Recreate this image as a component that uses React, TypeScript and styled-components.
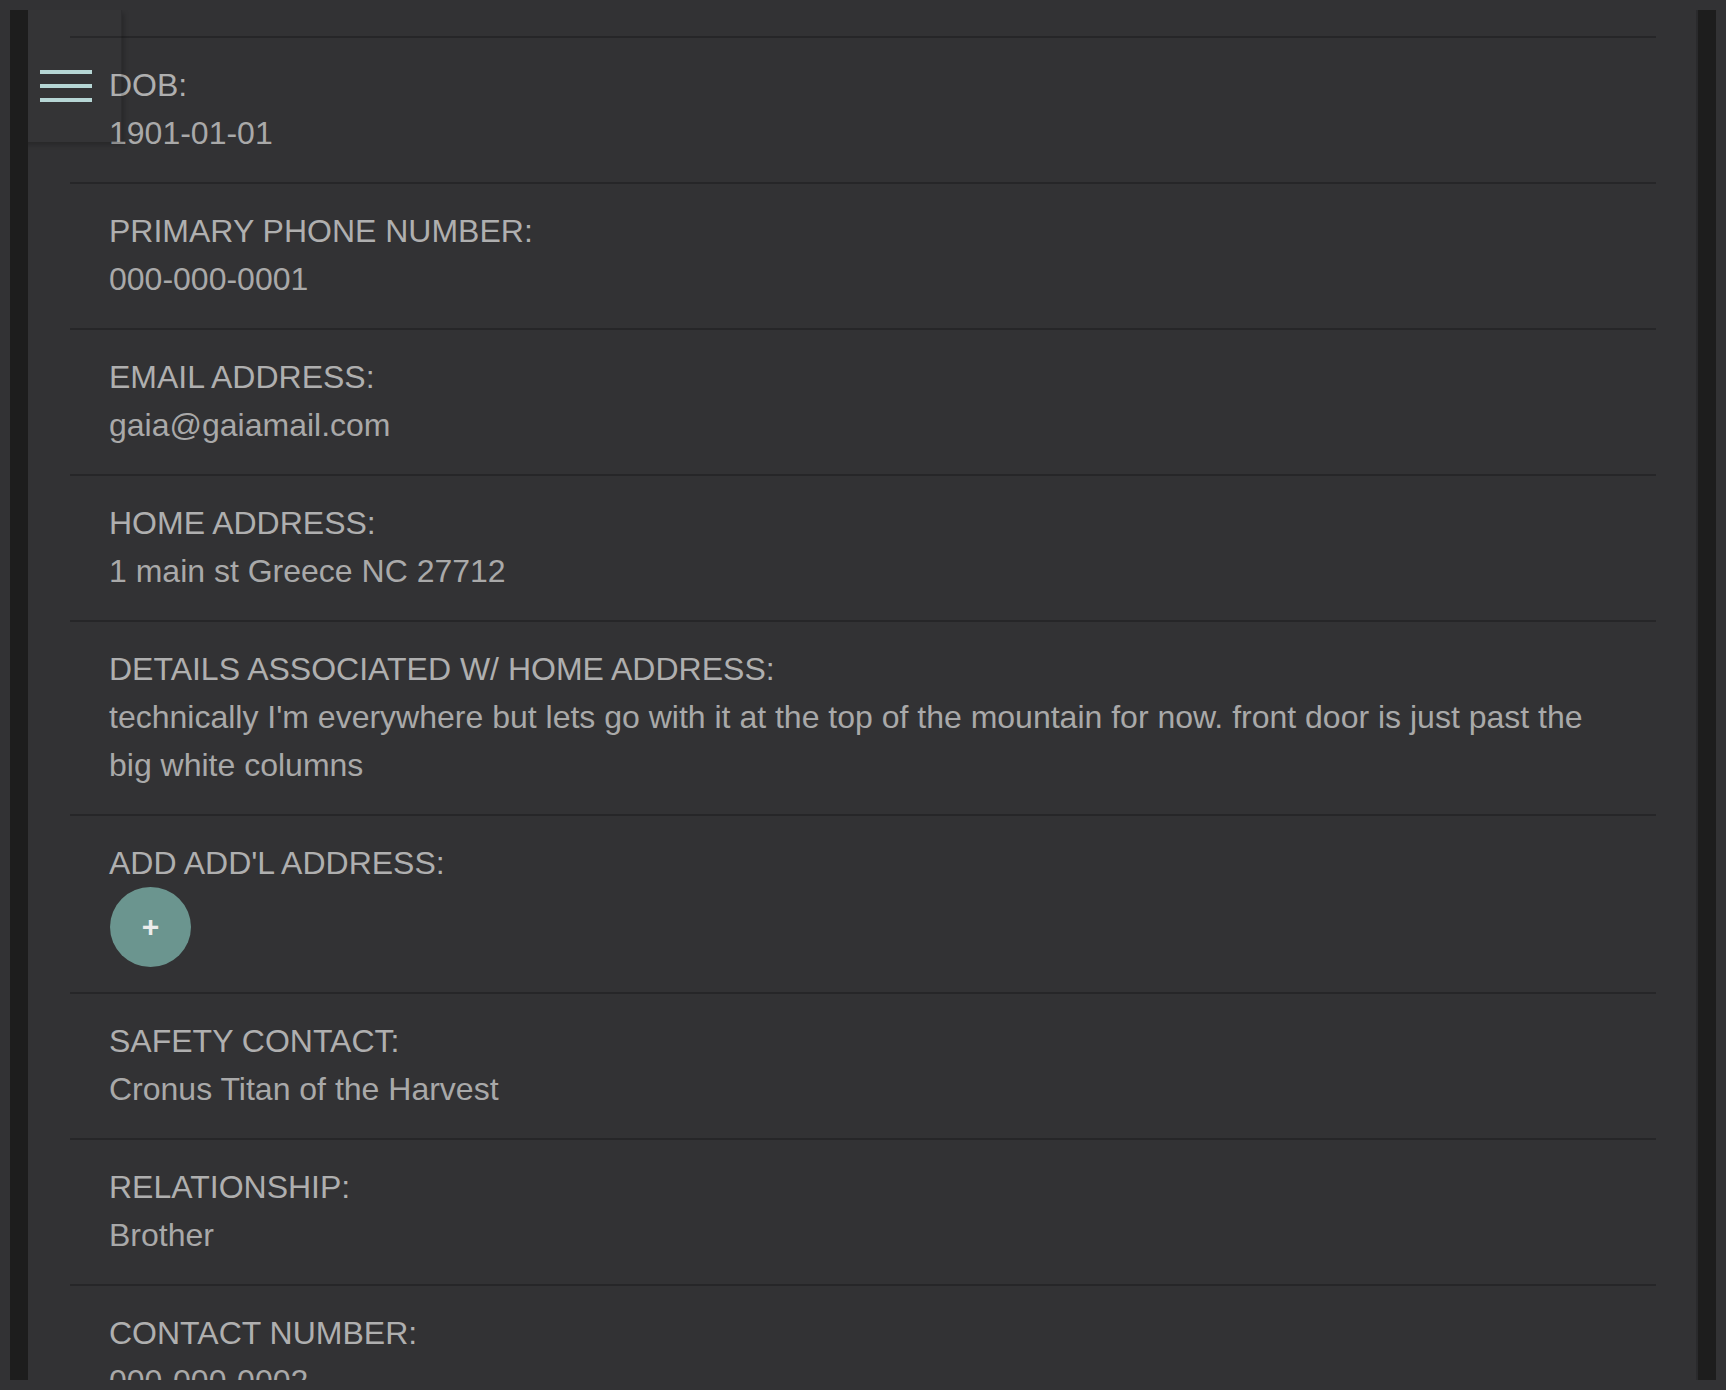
import React from "react";
import styled, { createGlobalStyle } from "styled-components";

const GlobalStyle = createGlobalStyle`
  html, body {
    margin: 0;
    padding: 0;
    background: #323234;
  }
  body {
    font-family: "Liberation Sans", Arial, Helvetica, sans-serif;
  }
`;

const Frame = styled.div`
  position: relative;
  box-sizing: border-box;
  margin: 10px;
  height: 1370px;
  overflow: hidden;
  background: #323234;
  border-left: 18px solid #1d1d1d;
  border-right: 18px solid #1d1d1d;
  box-shadow: inset -2px 0 0 #2a2a2c;
`;

const List = styled.div`
  padding: 26px 42px 0;
`;

const Row = styled.section`
  border-top: 2px solid #262628;
  padding: 23px 40px 25px 39px;
`;

const Label = styled.div`
  font-size: 32px;
  line-height: 48px;
  color: #afafaf;
  text-transform: uppercase;
`;

const Value = styled.div`
  font-size: 32px;
  line-height: 48px;
  color: #a9a9a9;
`;

const AddButton = styled.button`
  display: flex;
  align-items: center;
  justify-content: center;
  width: 81px;
  height: 80px;
  margin-left: 1px;
  padding: 0;
  border: none;
  border-radius: 50%;
  background: #6b958f;
  color: #ececec;
  font-family: "Liberation Sans", Arial, sans-serif;
  font-weight: bold;
  font-size: 30px;
  line-height: 1;
  cursor: pointer;
`;

const MenuBox = styled.div`
  position: absolute;
  top: 0;
  left: -18px;
  width: 112px;
  height: 132px;
  box-sizing: border-box;
  padding: 60px 0 0 30px;
  background: rgba(255, 255, 255, 0.012);
  box-shadow: 2px 3px 5px rgba(0, 0, 0, 0.22);
  border-right: 1px solid rgba(0, 0, 0, 0.12);
`;

const Hamburger = () => (
  <svg width="52" height="32" viewBox="0 0 52 32" aria-hidden="true">
    <rect x="0" y="0" width="52" height="4" fill="#b6d6d5" />
    <rect x="0" y="14" width="52" height="4" fill="#b6d6d5" />
    <rect x="0" y="28" width="52" height="4" fill="#b6d6d5" />
  </svg>
);

type Field = { label: string; value?: string; add?: boolean };

const fields: Field[] = [
  { label: "DOB:", value: "1901-01-01" },
  { label: "Primary Phone Number:", value: "000-000-0001" },
  { label: "Email Address:", value: "gaia@gaiamail.com" },
  { label: "Home Address:", value: "1 main st Greece NC 27712" },
  {
    label: "Details Associated w/ Home Address:",
    value:
      "technically I'm everywhere but lets go with it at the top of the mountain for now. front door is just past the big white columns",
  },
  { label: "Add Add'l Address:", add: true },
  { label: "Safety Contact:", value: "Cronus Titan of the Harvest" },
  { label: "Relationship:", value: "Brother" },
  { label: "Contact Number:", value: "000-000-0002" },
];

export default function App() {
  return (
    <>
      <GlobalStyle />
      <Frame>
        <List>
          {fields.map((f) => (
            <Row key={f.label}>
              <Label>{f.label}</Label>
              {f.add ? <AddButton>+</AddButton> : <Value>{f.value}</Value>}
            </Row>
          ))}
        </List>
        <MenuBox>
          <Hamburger />
        </MenuBox>
      </Frame>
    </>
  );
}
